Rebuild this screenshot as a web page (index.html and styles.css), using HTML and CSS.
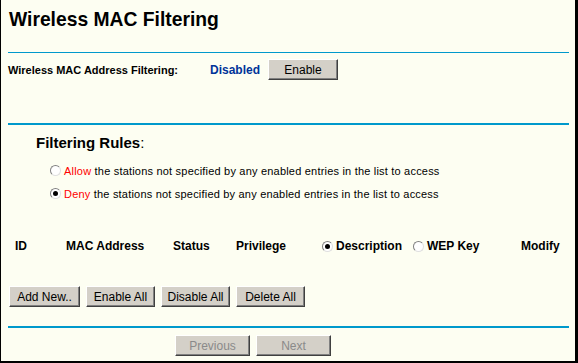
FILE: index.html
```html
<!DOCTYPE html>
<html lang="en">
<head>
  <meta charset="UTF-8">
  <title>Wireless MAC Filtering</title>
  <link rel="stylesheet" href="styles.css">
</head>
<body>
  <div class="frame">
    <h1 class="title">Wireless MAC Filtering</h1>
    <hr class="rule thin">

    <div class="state-row">
      <span class="state-label">Wireless MAC Address Filtering:</span>
      <span class="state-value">Disabled</span>
      <button class="btn btn-enable">Enable</button>
    </div>

    <hr class="rule thick">

    <h2 class="section">Filtering Rules<span class="colon">:</span></h2>
    <div class="options">
      <label class="option"><span class="radio"></span><span class="warn">Allow</span>&nbsp;the stations not specified by any enabled entries in the list to access</label>
      <label class="option"><span class="radio checked"></span><span class="warn">Deny</span>&nbsp;the stations not specified by any enabled entries in the list to access</label>
    </div>

    <div class="list-head">
      <span class="col col-id">ID</span>
      <span class="col col-mac">MAC Address</span>
      <span class="col col-status">Status</span>
      <span class="col col-priv">Privilege</span>
      <span class="col col-desc"><span class="radio checked"></span>Description</span>
      <span class="col col-wep"><span class="radio"></span>WEP Key</span>
      <span class="col col-modify">Modify</span>
    </div>

    <div class="actions">
      <button class="btn btn-add">Add New..</button>
      <button class="btn btn-all">Enable All</button>
      <button class="btn btn-all">Disable All</button>
      <button class="btn btn-all">Delete All</button>
    </div>

    <hr class="rule thick bottom">

    <div class="pager">
      <button class="btn btn-page" disabled>Previous</button>
      <button class="btn btn-page" disabled>Next</button>
    </div>
  </div>
</body>
</html>
```

FILE: styles.css
```css
* {
  margin: 0;
  padding: 0;
  box-sizing: border-box;
}
body {
  font-family: 'Liberation Sans', Arial, sans-serif;
  font-size: 11px;
  color: #000;
  background-color: #fdfef2;
}
.frame {
  width: 578px;
  height: 363px;
  background-color: #fdfef2;
  border-left: 1px solid #000;
  border-right: 3px solid #000;
  border-bottom: 2px solid #000;
  padding-left: 7px;
  overflow: hidden;
}
.title {
  font-size: 19.3px;
  font-weight: bold;
  line-height: 24px;
  padding: 8px 0 0 1px;
  height: 52px;
}
.rule {
  border: none;
  width: 561px;
  background-color: #0099cc;
}
.thin {
  height: 1px;
}
.thick {
  height: 2px;
}
.state-row {
  display: flex;
  align-items: center;
  height: 70px;
  padding-bottom: 43px;
  padding-top: 6px;
}
.state-label {
  font-weight: bold;
  width: 202px;
}
.state-value {
  font-weight: bold;
  color: #003399;
  font-size: 12px;
  width: 58px;
}
.btn {
  font-family: 'Liberation Sans', Arial, sans-serif;
  font-size: 12px;
  height: 21px;
  background-color: #d4d0c8;
  color: #000;
  border: 1px solid;
  border-color: #ffffff #404040 #404040 #ffffff;
  box-shadow: inset -1px -1px 0 #808080;
  padding: 0 4px;
  white-space: nowrap;
}
.btn:disabled {
  color: #8a8a8a;
}
.btn-enable {
  width: 70px;
}
.section {
  font-size: 15px;
  font-weight: bold;
  line-height: 18px;
  margin: 9px 0 0 28px;
}
.colon {
  font-weight: normal;
}
.options {
  display: flex;
  flex-direction: column;
  gap: 10px;
  margin: 12px 0 0 42px;
  letter-spacing: 0.2px;
}
.option {
  display: flex;
  align-items: center;
  height: 13px;
}
.warn {
  color: #ff0000;
}
.radio {
  display: inline-block;
  width: 11px;
  height: 11px;
  border-radius: 50%;
  border: 1px solid;
  border-color: #808080 #e0e0e0 #e0e0e0 #808080;
  background-color: #fff;
  margin-right: 3px;
  position: relative;
  flex-shrink: 0;
}
.radio.checked::after {
  content: '';
  position: absolute;
  left: 2px;
  top: 2px;
  width: 5px;
  height: 5px;
  border-radius: 50%;
  background-color: #000;
}
.list-head {
  display: flex;
  align-items: center;
  height: 18px;
  margin-top: 37px;
  font-weight: bold;
  font-size: 12px;
}
.col {
  display: flex;
  align-items: center;
}
.col-id { width: 58px; padding-left: 7px; }
.col-mac { width: 107px; }
.col-status { width: 63px; }
.col-priv { width: 86px; }
.col-desc { width: 91px; }
.col-wep { width: 108px; }
.actions {
  display: flex;
  gap: 6px;
  margin-top: 31px;
  padding-left: 1px;
}
.btn-add { width: 71px; }
.btn-all { width: 69px; }
.bottom {
  margin-top: 19px;
}
.pager {
  display: flex;
  gap: 6px;
  margin-top: 7px;
  padding-left: 167px;
}
.btn-page {
  width: 75px;
}
```
